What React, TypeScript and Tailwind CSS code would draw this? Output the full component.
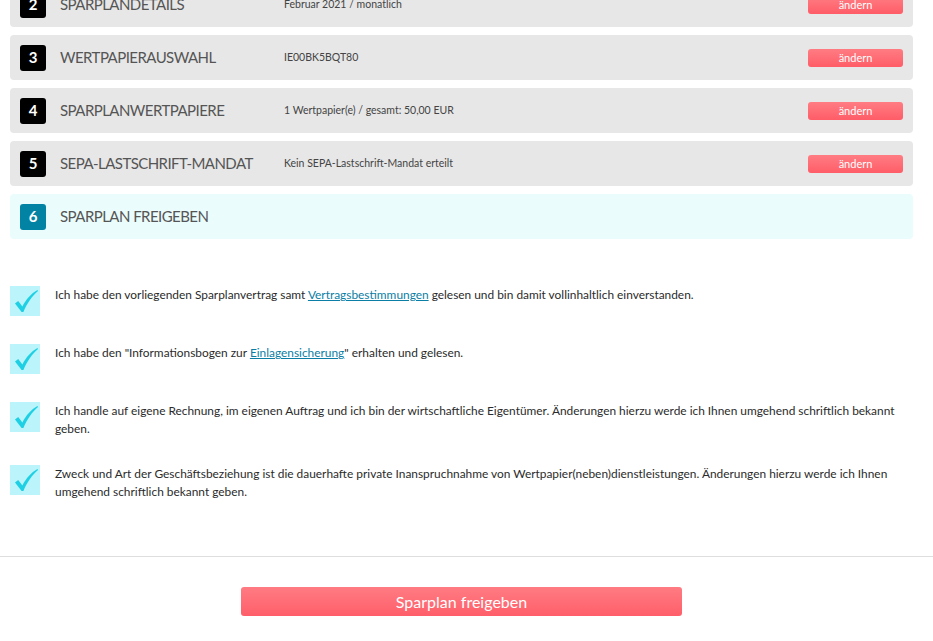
import React from 'react'

const font = { fontFamily: 'Lato, "Open Sans", sans-serif' }

interface Step {
  nr: number
  title: string
  summary?: string
  active?: boolean
}

const steps: Step[] = [
  { nr: 2, title: 'Sparplandetails', summary: 'Februar 2021 / monatlich' },
  { nr: 3, title: 'Wertpapierauswahl', summary: 'IE00BK5BQT80' },
  { nr: 4, title: 'Sparplanwertpapiere', summary: '1 Wertpapier(e) / gesamt: 50,00 EUR' },
  { nr: 5, title: 'SEPA-Lastschrift-Mandat', summary: 'Kein SEPA-Lastschrift-Mandat erteilt' },
  { nr: 6, title: 'Sparplan freigeben', active: true },
]

function StepRow({ step }: { step: Step }) {
  return (
    <div
      className={`flex h-[45px] items-center rounded-[4px] px-[10px] ${
        step.active ? 'bg-[#eafcfc]' : 'bg-[#e7e7e7]'
      }`}
    >
      <div
        className={`flex h-[26px] w-[26px] shrink-0 items-center justify-center rounded-[3px] text-[15px] font-bold text-white ${
          step.active ? 'bg-[#0383a4]' : 'bg-black'
        }`}
      >
        {step.nr}
      </div>
      <div className="ml-[14px] w-[224px] shrink-0 text-[15px] uppercase tracking-[-0.55px] text-[#555]">
        {step.title}
      </div>
      <div className="flex-1 text-[10.5px] text-[#444]">{step.summary}</div>
      {!step.active && (
        <button className="h-[18px] w-[95px] rounded-[3px] bg-gradient-to-b from-[#ff7c83] to-[#ff5c67] text-[11px] leading-[18px] text-white">
          ändern
        </button>
      )}
    </div>
  )
}

function CheckBox() {
  return (
    <div className="h-[30px] w-[30px] shrink-0 bg-[#bbf4fa]">
      <svg viewBox="0 0 30 30" className="h-[30px] w-[30px]">
        <path
          d="M5 17.5 L8.2 15 L12.4 20.4 C16 13.5 21 7.5 27.5 4 L28 5 C22 10 17 17.5 13.4 26 L11.6 26 Z"
          fill="#1fd0e4"
        />
      </svg>
    </div>
  )
}

const linkCls = 'text-[#0a7ea4] underline'

export default function App() {
  const items: React.ReactNode[] = [
    <>
      Ich habe den vorliegenden Sparplanvertrag samt <a className={linkCls}>Vertragsbestimmungen</a> gelesen und bin
      damit vollinhaltlich einverstanden.
    </>,
    <>
      Ich habe den "Informationsbogen zur <a className={linkCls}>Einlagensicherung</a>" erhalten und gelesen.
    </>,
    <>
      Ich handle auf eigene Rechnung, im eigenen Auftrag und ich bin der wirtschaftliche Eigentümer. Änderungen hierzu
      werde ich Ihnen umgehend schriftlich bekannt geben.
    </>,
    <>
      Zweck und Art der Geschäftsbeziehung ist die dauerhafte private Inanspruchnahme von Wertpapier(neben)dienstleistungen.
      Änderungen hierzu werde ich Ihnen umgehend schriftlich bekannt geben.
    </>,
  ]

  return (
    <div className="min-h-[641px] w-[933px] overflow-hidden bg-white" style={font}>
      <div className="-mt-[18px] px-[10px]">
        <div className="w-[903px]">
          <div className="flex flex-col gap-[8px]">
            {steps.map((s) => (
              <StepRow key={s.nr} step={s} />
            ))}
          </div>

          <div className="mt-[47px] flex flex-col gap-[28px]">
            {items.map((t, i) => (
              <div key={i} className="flex items-start">
                <CheckBox />
                <p className="ml-[15px] pr-[8px] text-[11.9px] leading-[17.5px] text-[#2b2b2b]">{t}</p>
              </div>
            ))}
          </div>
        </div>
      </div>

      <div className="mt-[56px] h-px w-full bg-[#dedede]" />

      <div className="ml-[10px] flex w-[903px] justify-center pt-[30px]">
        <button className="h-[29px] w-[441px] rounded-[3px] bg-gradient-to-b from-[#ff7b83] to-[#ff5e69] text-[16px] text-white">
          Sparplan freigeben
        </button>
      </div>
    </div>
  )
}
